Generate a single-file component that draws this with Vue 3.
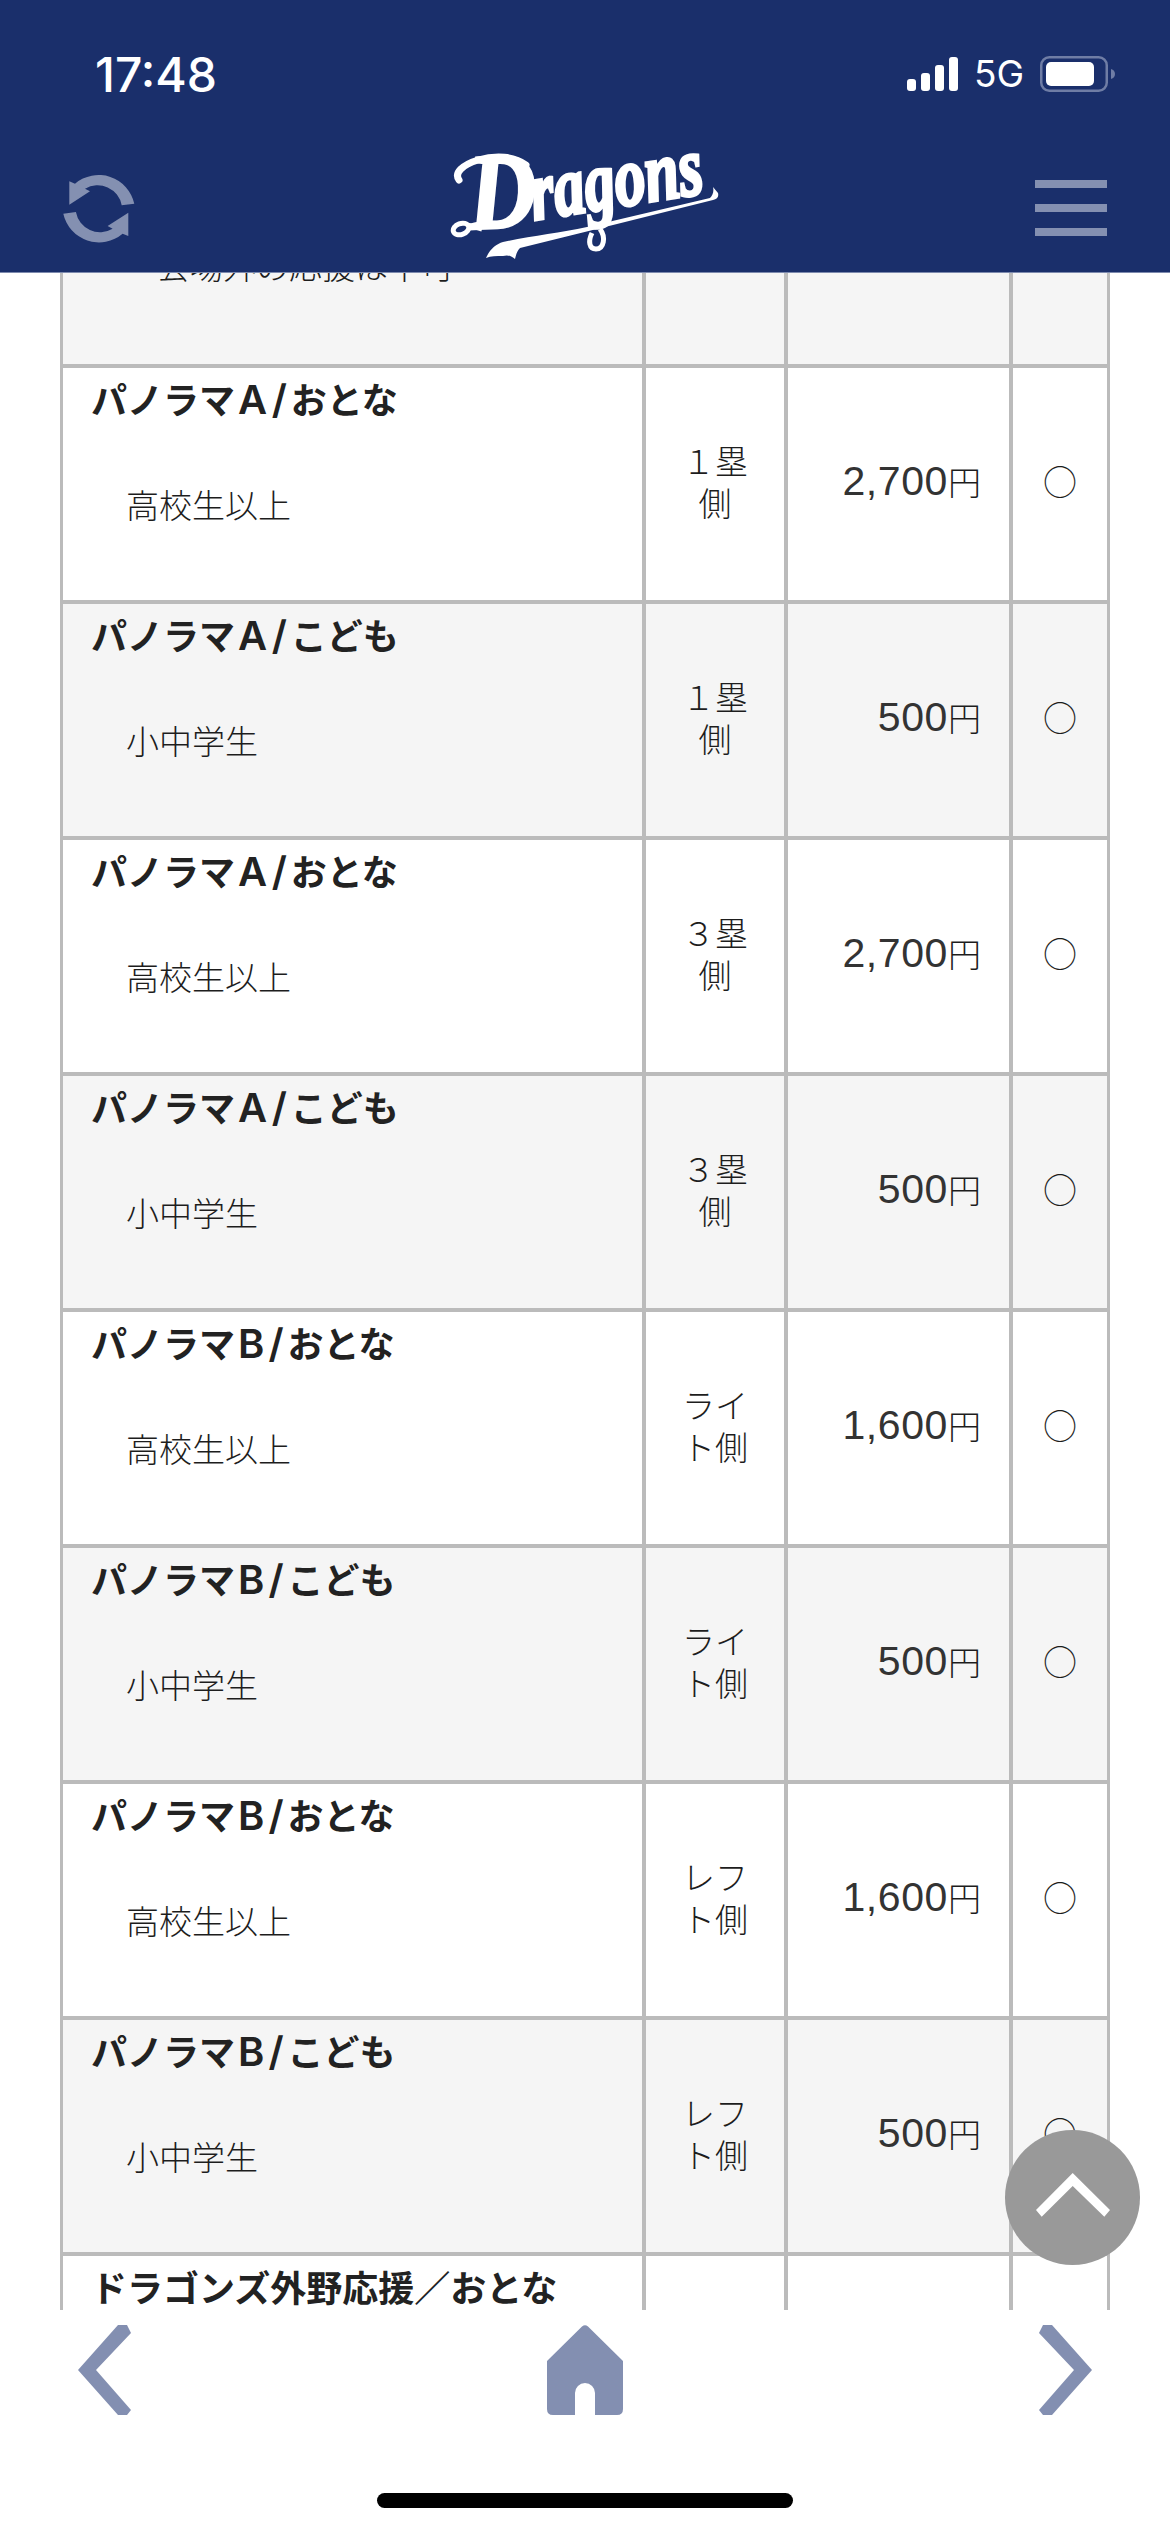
<script setup>
const tickets = [
  { name: 'パノラマ', grade: 'A/', who: 'おとな', sub: '高校生以上', side: '１塁側', digits: '2,700' },
  { name: 'パノラマ', grade: 'A/', who: 'こども', sub: '小中学生', side: '１塁側', digits: '500' },
  { name: 'パノラマ', grade: 'A/', who: 'おとな', sub: '高校生以上', side: '３塁側', digits: '2,700' },
  { name: 'パノラマ', grade: 'A/', who: 'こども', sub: '小中学生', side: '３塁側', digits: '500' },
  { name: 'パノラマ', grade: 'B/', who: 'おとな', sub: '高校生以上', side: 'ライト側', digits: '1,600' },
  { name: 'パノラマ', grade: 'B/', who: 'こども', sub: '小中学生', side: 'ライト側', digits: '500' },
  { name: 'パノラマ', grade: 'B/', who: 'おとな', sub: '高校生以上', side: 'レフト側', digits: '1,600' },
  { name: 'パノラマ', grade: 'B/', who: 'こども', sub: '小中学生', side: 'レフト側', digits: '500' },
]
const signalBars = [
  { x: 0, y: 22, h: 12 },
  { x: 14, y: 16, h: 18 },
  { x: 28, y: 8, h: 26 },
  { x: 42, y: 0, h: 34 },
]
</script>

<template>
  <div class="phone">
    <header class="header">
      <div class="status">
        <span class="time">17:48</span>
        <div class="status-right">
          <svg class="signal" width="51" height="34" viewBox="0 0 51 34">
            <rect v-for="b in signalBars" :key="b.x" :x="b.x" :y="b.y" width="9" :height="b.h" rx="3" fill="#fff" />
          </svg>
          <span class="network">5G</span>
          <svg class="battery" width="75" height="36" viewBox="0 0 75 36">
            <rect x="1.25" y="1.25" width="65.5" height="33.5" rx="8" fill="none" stroke="#6f7da5" stroke-width="2.5" />
            <rect x="6" y="6" width="48" height="24" rx="5" fill="#fff" />
            <path d="M71 13c2.500 .6 4 2.600 4 5s-1.500 4.400-4 5z" fill="#6f7da5" />
          </svg>
        </div>
      </div>
      <nav class="nav">
        <svg class="refresh" width="72" height="73" viewBox="13 20 72 73">
          <g fill="#8490b1">
            <path d="M19.300 29.300V52.700L40 39.300 35 36.700A24.500 24.500 0 0 1 71.700 53.300L84.300 51.700A36.500 36.500 0 0 0 25 31.700Z" />
            <path transform="rotate(180 48.800 56.700)" d="M19.300 29.300V52.700L40 39.300 35 36.700A24.500 24.500 0 0 1 71.700 53.300L84.300 51.700A36.500 36.500 0 0 0 25 31.700Z" />
          </g>
        </svg>
        <svg class="logo" width="270" height="110" viewBox="0 0 270 110">
          <g fill="#fff" stroke="#fff">
            <!-- swash under the wordmark, with the flourishes around it -->
            <path stroke="none" d="M36 105C40 96 46 91 53 89C80 83 110 80 137 74L260 45C263 42 264 38 263 34L268 40C269 44 267 46 263 47L163 72L70 95C67 98 66 102 65 106C60 102 57 102 53 103C46 103 41 103 36 105Z" />
            <path fill="none" stroke-width="5" d="M150 76C156 84 154 96 146 96 139 96 138 88 142 80" />
            <ellipse cx="11" cy="76" rx="8" ry="5.500" fill="none" stroke-width="5" transform="rotate(-20 11 76)" />
            <path fill="none" stroke-width="5" d="M18 72C24 74 28 75 32 76" />
            <path fill="none" stroke-width="7" stroke-linecap="round" d="M9 27C4 20 12 12 28 7 46 2 64 3 76 12" />
            <text class="wordmark" transform="translate(20 76) rotate(-3)" font-size="108" stroke-width="3" textLength="68" lengthAdjust="spacingAndGlyphs">D</text>
            <text class="wordmark" transform="translate(84 67) rotate(-9)" font-size="84" stroke-width="3.500" textLength="174" lengthAdjust="spacingAndGlyphs">ragons</text>
          </g>
        </svg>
        <div class="menu"><i></i><i></i><i></i></div>
      </nav>
    </header>

    <main class="scroller">
      <div class="table">
        <div class="row">
          <div class="cell name"><p class="note">会場外の応援は不可</p></div>
          <div class="cell"></div>
          <div class="cell"></div>
          <div class="cell"></div>
        </div>
        <div v-for="(t, i) in tickets" :key="i" class="row" :class="{ alt: i % 2 === 1 }">
          <div class="cell name">
            <p class="title">{{ t.name }}<span class="grade">{{ t.grade }}</span>{{ t.who }}</p>
            <p class="sub">{{ t.sub }}</p>
          </div>
          <div class="cell side">{{ t.side }}</div>
          <div class="cell price"><span class="digits">{{ t.digits }}</span>円</div>
          <div class="cell mark">○</div>
        </div>
        <div class="row">
          <div class="cell name"><p class="title">ドラゴンズ外野応援／おとな</p></div>
          <div class="cell"></div>
          <div class="cell"></div>
          <div class="cell"></div>
        </div>
      </div>
    </main>

    <footer class="footer">
      <div class="footer-nav">
        <svg width="54" height="90" viewBox="0 0 54 90">
          <path d="M53 8L49 0H40L0 45 40 90H49L53 85 18 45Z" fill="#838fb1" />
        </svg>
        <svg width="76" height="90" viewBox="0 0 76 90">
          <path fill-rule="evenodd" d="M35 1.500Q38-1 41 1.500L76 36V84Q76 90 70 90H48V68A10 10 0 0 0 28 68V90H6Q0 90 0 84V36Z" fill="#838fb1" />
        </svg>
        <svg width="54" height="90" viewBox="0 0 54 90">
          <path d="M1 8L5 0H14L54 45 14 90H5L1 85 36 45Z" fill="#838fb1" />
        </svg>
      </div>
      <div class="home-bar"></div>
    </footer>

    <button class="to-top" type="button" aria-label="ページ上部へ">
      <svg width="135" height="135" viewBox="0 0 135 135">
        <path d="M67.700 43L105 80 99.300 86.700 67.700 56 36.700 86.700 31 80Z" fill="#fff" />
      </svg>
    </button>
  </div>
</template>

<style scoped>
.phone {
  position: relative;
  display: flex;
  flex-direction: column;
  width: 1170px;
  height: 2532px;
  overflow: hidden;
  background: #fff;
  color: #1d1d1d;
  font-family: "Noto Sans CJK JP", "Noto Sans", sans-serif;
}

.header {
  flex: none;
  height: 273px;
  box-sizing: border-box;
  background: #1a2f6b;
  border-bottom: 1px solid #7d8aae;
}

.status {
  display: flex;
  justify-content: space-between;
  align-items: center;
  height: 36px;
  padding: 57px 55px 0 95px;
}

.time {
  color: #fff;
  font-family: Inter, sans-serif;
  font-size: 48px;
  font-weight: 500;
  line-height: 36px;
}

.status-right {
  display: flex;
  align-items: center;
  margin-top: -2px;
}

.network {
  margin: 0 16px;
  color: #fff;
  font-family: Inter, sans-serif;
  font-size: 37px;
  line-height: 36px;
}

.nav {
  display: flex;
  justify-content: space-between;
  align-items: center;
  height: 110px;
  margin-top: 60px;
  padding: 0 63px;
}

.wordmark {
  font-family: "Liberation Serif", serif;
  font-style: italic;
  font-weight: 700;
}

.menu {
  display: flex;
  flex-direction: column;
  gap: 16px;
  width: 72px;
}

.menu i {
  display: block;
  height: 8px;
  background: #8490b1;
}

.scroller {
  flex: 1;
  min-height: 0;
  overflow: hidden;
}

.table {
  margin: -145px 60px 0;
  border-left: 3px solid #bbb;
  border-right: 3px solid #bbb;
}

.row {
  display: grid;
  grid-template-columns: 579px 142px 225px 98px;
  height: 236px;
  box-sizing: border-box;
  border-top: 4px solid #bbb;
  background: #fff;
}

.row:first-child,
.row.alt {
  background: #f5f5f5;
}

.cell {
  box-sizing: border-box;
  min-width: 0;
  border-left: 4px solid #bbb;
  font-size: 33px;
  font-weight: 300;
  line-height: 42px;
}

.cell.name {
  border-left: 0;
  padding: 9px 20px 0 28px;
}

p { margin: 0; }

.title {
  font-size: 36px;
  font-weight: 700;
  line-height: 42px;
  white-space: nowrap;
  color: #222;
}

.grade {
  margin: 0 0 0 3px;
  font-family: Inter, sans-serif;
  font-size: 40px;
  font-weight: 600;
  letter-spacing: 4px;
}

.sub {
  margin-top: 62px;
  padding-left: 35px;
}

.note {
  margin-top: 103px;
  padding-left: 66px;
  white-space: nowrap;
}

.side {
  display: flex;
  align-items: center;
  justify-content: center;
  padding: 0 24px 6px;
  text-align: center;
}

.price {
  display: flex;
  align-items: center;
  justify-content: flex-end;
  padding: 0 28px 6px 0;
}

.digits {
  color: #333;
  font-family: "Liberation Sans", sans-serif;
  font-size: 41px;
  font-weight: 400;
  letter-spacing: .6px;
}

.mark {
  display: flex;
  align-items: center;
  justify-content: center;
  padding-bottom: 6px;
  font-size: 34px;
}

.footer {
  flex: none;
  height: 222px;
  background: #fff;
}

.footer-nav {
  display: flex;
  justify-content: space-between;
  padding: 15px 78px 0;
}

.footer-nav svg { display: block; }

.home-bar {
  width: 416px;
  height: 15px;
  margin: 78px auto 0;
  border-radius: 8px;
  background: #000;
}

.to-top {
  position: absolute;
  right: 30px;
  bottom: 267px;
  width: 135px;
  height: 135px;
  padding: 0;
  border: 0;
  border-radius: 50%;
  background: #999;
}

.to-top svg { display: block; }
</style>
